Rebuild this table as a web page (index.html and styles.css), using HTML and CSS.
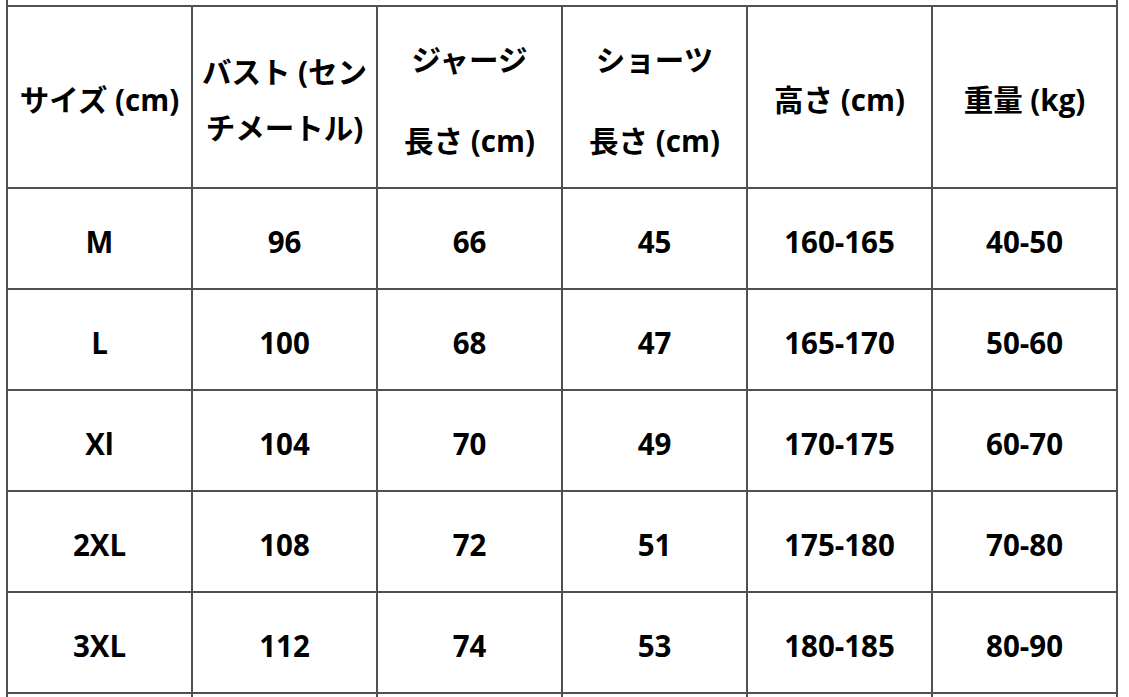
FILE: index.html
```html
<!DOCTYPE html>
<html lang="ja">
<head>
<meta charset="utf-8">
<title>サイズ表</title>
<link rel="stylesheet" href="styles.css">
</head>
<body>
<div class="page">
<table class="size-table">
  <colgroup>
    <col class="c"><col class="c"><col class="c"><col class="c"><col class="c"><col class="c">
  </colgroup>
  <tr class="cut-top"><td colspan="6"></td></tr>
  <tr class="head">
    <th>サイズ (cm)</th>
    <th>バスト (センチメートル)</th>
    <th><div class="stack"><span>ジャージ</span><span>長さ (cm)</span></div></th>
    <th><div class="stack"><span>ショーツ</span><span>長さ (cm)</span></div></th>
    <th>高さ (cm)</th>
    <th>重量 (kg)</th>
  </tr>
  <tr class="data"><td>M</td><td>96</td><td>66</td><td>45</td><td>160-165</td><td>40-50</td></tr>
  <tr class="data"><td>L</td><td>100</td><td>68</td><td>47</td><td>165-170</td><td>50-60</td></tr>
  <tr class="data"><td>Xl</td><td>104</td><td>70</td><td>49</td><td>170-175</td><td>60-70</td></tr>
  <tr class="data"><td>2XL</td><td>108</td><td>72</td><td>51</td><td>175-180</td><td>70-80</td></tr>
  <tr class="data"><td>3XL</td><td>112</td><td>74</td><td>53</td><td>180-185</td><td>80-90</td></tr>
  <tr class="data"><td></td><td></td><td></td><td></td><td></td><td></td></tr>
</table>
</div>
</body>
</html>
```
FILE: styles.css
```css
html, body {
  margin: 0;
  padding: 0;
  background: #fff;
  height: 697px;
  overflow: hidden;
}

.page {
  padding-left: 6px;
}

.size-table {
  border-collapse: collapse;
  table-layout: fixed;
  width: 1112px;
  font-family: "Open Sans", "Noto Sans CJK JP", sans-serif;
  font-weight: 700;
  font-size: 29.5px;
  color: #000;
}

.size-table .c {
  width: 185px;
}

.size-table th,
.size-table td {
  border: 2px solid #505050;
  text-align: center;
  vertical-align: middle;
  padding: 6px 6px 0;
  font-weight: 700;
}

.cut-top td {
  height: 5px;
  padding: 0;
  border-top: none;
}

.head th {
  height: 174px;
  line-height: 56px;
}

.stack {
  display: flex;
  flex-direction: column;
  align-items: center;
  gap: 25px;
}

.data td {
  height: 93px;
  line-height: 40px;
}
```
